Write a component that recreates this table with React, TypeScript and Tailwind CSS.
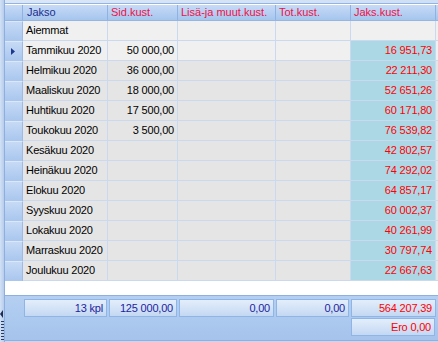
import React from "react";

const rows: [string, string, string][] = [
  ["Aiemmat", "", ""],
  ["Tammikuu 2020", "50 000,00", "16 951,73"],
  ["Helmikuu 2020", "36 000,00", "22 211,30"],
  ["Maaliskuu 2020", "18 000,00", "52 651,26"],
  ["Huhtikuu 2020", "17 500,00", "60 171,80"],
  ["Toukokuu 2020", "3 500,00", "76 539,82"],
  ["Kesäkuu 2020", "", "42 802,57"],
  ["Heinäkuu 2020", "", "74 292,02"],
  ["Elokuu 2020", "", "64 857,17"],
  ["Syyskuu 2020", "", "60 002,37"],
  ["Lokakuu 2020", "", "40 261,99"],
  ["Marraskuu 2020", "", "30 797,74"],
  ["Joulukuu 2020", "", "22 667,63"],
];

function Indicator({ active }: { active?: boolean }) {
  return (
    <div className="w-[18px] h-full border-r border-[#9dbbe6] bg-gradient-to-b from-[#c6daf5] to-[#a9c6ee] border-t border-t-[#dce8f8] flex items-center justify-center">
      {active && (
        <svg width="5" height="7" viewBox="0 0 5 7">
          <path d="M0 0 L4 3.5 L0 7 Z" fill="#1b3a8e" />
        </svg>
      )}
    </div>
  );
}

const footCell =
  "h-full border border-[#8fb4e6] bg-gradient-to-b from-[#e4eefb] to-[#c4d8f3] flex items-center justify-end pr-[3px]";

export default function App() {
  return (
    <div
      className="w-[438px] h-[342px] flex bg-[#c5d8f1] text-[11px] tracking-[-0.2px] overflow-hidden"
      style={{ fontFamily: '"Liberation Sans", Arial, sans-serif' }}
    >
      {/* splitter */}
      <div className="w-[4px] h-full bg-gradient-to-r from-[#d2e1f5] to-[#b7cdee] flex flex-col justify-end items-center pb-[1px]">
        <svg width="4" height="8" viewBox="0 0 4 8" className="mb-[3px]">
          <path d="M3 0 L0 4 L3 8 Z" fill="#1d2b55" />
        </svg>
        <div className="flex flex-col gap-[2px] mb-[1px]">
          {Array.from({ length: 7 }).map((_, i) => (
            <div key={i} className="w-[3px] h-[1px] bg-[#2a3a66]" />
          ))}
        </div>
      </div>

      <div className="flex-1 flex flex-col border-l border-[#8eaedd]">
        {/* grid */}
        <div className="h-[295px] flex flex-col bg-white">
          <div className="h-[3px] bg-gradient-to-r from-[#dbe7f7] to-[#cfdff4]" />
          <div className="h-[1px] bg-[#93b4e2]" />
          {/* header */}
          <div className="h-[17px] flex border-t border-t-white border-b border-b-[#95b6e3] bg-gradient-to-b from-[#c7dbf6] to-[#a6c5ee] tracking-normal">
            <div className="w-[18px] border-r border-[#8fb2e3]" />
            <div className="w-[85px] border-r border-[#8fb2e3] pl-[4px] flex items-center text-[#1e2e8e]">Jakso</div>
            <div className="w-[70px] border-r border-[#8fb2e3] pl-[3px] flex items-center text-[#ee1148]">Sid.kust.</div>
            <div className="w-[98px] border-r border-[#8fb2e3] pl-[3px] flex items-center text-[#ee1148] whitespace-nowrap">Lisä-ja muut.kust.</div>
            <div className="w-[75px] border-r border-[#8fb2e3] pl-[3px] flex items-center text-[#ee1148]">Tot.kust.</div>
            <div className="w-[85px] border-r border-[#8fb2e3] pl-[3px] flex items-center text-[#ee1148]">Jaks.kust.</div>
            <div className="flex-1" />
          </div>
          {rows.map(([name, sid, jaks], i) => {
            const light = i < 2;
            const bg = light ? "bg-[#f0f0f0]" : "bg-[#e5e5e5]";
            return (
              <div key={i} className="h-[20px] flex">
                <Indicator active={i === 1} />
                <div className={`w-[85px] border-r border-b border-[#cad9ee] pl-[3px] flex items-center text-black whitespace-nowrap ${bg}`}>{name}</div>
                <div className={`w-[70px] border-r border-b border-[#cad9ee] pr-[3px] flex items-center justify-end text-black ${bg}`}>{sid}</div>
                <div className={`w-[98px] border-r border-b border-[#cad9ee] ${bg}`} />
                <div className={`w-[75px] border-r border-b border-[#cad9ee] ${bg}`} />
                <div className={`w-[85px] border-r border-b border-[#cad9ee] pr-[3px] flex items-center justify-end text-[#ff0000] ${i === 0 ? "bg-[#f0f0f0]" : "bg-[#acd8e6]"}`}>{jaks}</div>
                <div className={`flex-1 border-b border-[#cad9ee] ${bg}`} />
              </div>
            );
          })}
        </div>

        {/* footer */}
        <div className="flex-1 border-t border-[#8eb0e0] border-b border-b-[#8eb0e0] bg-gradient-to-b from-[#b4cff1] to-[#a5c3ec] pt-[3px] flex flex-col gap-[1px] mb-[1px]">
          <div className="h-[18px] flex">
            <div className="w-[18px]" />
            <div className="w-[85px] px-[1px]">
              <div className={`${footCell} text-[#1c1fa0]`}>13 kpl</div>
            </div>
            <div className="w-[70px] px-[1px]">
              <div className={`${footCell} text-[#1c1fa0]`}>125 000,00</div>
            </div>
            <div className="w-[98px] pl-[1px] pr-[2px]">
              <div className={`${footCell} text-[#1c1fa0]`}>0,00</div>
            </div>
            <div className="w-[75px] pr-[2px]">
              <div className={`${footCell} text-[#1c1fa0]`}>0,00</div>
            </div>
            <div className="w-[85px]">
              <div className={`${footCell} text-[#ff0000]`}>564 207,39</div>
            </div>
          </div>
          <div className="h-[18px] flex">
            <div className="w-[346px]" />
            <div className="w-[84px]">
              <div className={`${footCell} text-[#ff0000]`}>Ero 0,00</div>
            </div>
          </div>
        </div>
      </div>
    </div>
  );
}
